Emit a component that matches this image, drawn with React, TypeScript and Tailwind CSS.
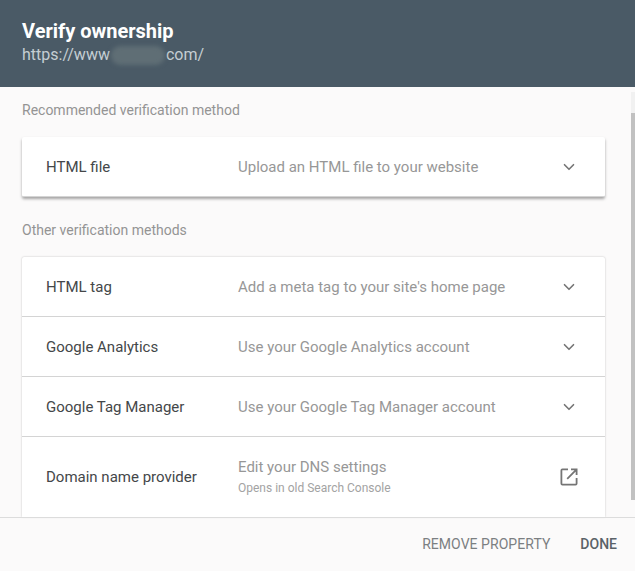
import { ChevronDown } from "lucide-react";

interface Method {
  name: string;
  description: string;
}

const otherMethods: Method[] = [
  { name: "HTML tag", description: "Add a meta tag to your site's home page" },
  { name: "Google Analytics", description: "Use your Google Analytics account" },
  { name: "Google Tag Manager", description: "Use your Google Tag Manager account" },
];

function MethodRow({ name, description }: Method) {
  return (
    <div className="flex h-[60px] items-center border-b border-[#d4d4d4] pl-6 pr-[27px] pt-[1px]">
      <div className="w-[192px] text-[15px] text-[#444749]">{name}</div>
      <div className="flex-1 text-[15px] text-[#979797]">{description}</div>
      <ChevronDown size={18} strokeWidth={2.2} className="text-[#757575]" />
    </div>
  );
}

export default function App() {
  return (
    <div className="flex h-[571px] w-[635px] flex-col overflow-hidden bg-[#fbfafa] font-['Roboto',sans-serif]">
      <header className="h-[87px] shrink-0 bg-[#4a5a66] pl-[22px] pt-[20px]">
        <h1 className="text-[20px] font-bold leading-[23px] text-white">Verify ownership</h1>
        <div className="flex items-center text-[16px] leading-[24px] text-[#c5ced3]">
          <span>https://www</span>
          <span className="mx-[1px] h-[19px] w-[54px] rounded-full bg-[#5f6e75] blur-[2px]" />
          <span>com/</span>
        </div>
      </header>

      <div className="flex min-h-0 flex-1">
        <main className="min-w-0 flex-1 pl-[22px] pr-[26px]">
          <h2 className="pt-[15px] text-[14px] leading-[17px] text-[#949494]">Recommended verification method</h2>
          <section className="mt-[18px] rounded-[2px] bg-white shadow-[0_2px_3px_rgba(0,0,0,0.35)]">
            <MethodRow name="HTML file" description="Upload an HTML file to your website" />
          </section>
          <h2 className="mt-[25px] text-[14px] leading-[17px] text-[#949494]">Other verification methods</h2>
          <section className="mt-[18px] h-[260px] rounded-t-[2px] bg-white shadow-[0_0_2px_rgba(0,0,0,0.25)]">
            {otherMethods.map((m) => (
              <MethodRow key={m.name} {...m} />
            ))}
            <div className="flex h-[80px] items-center pl-6 pr-[27px]">
              <div className="w-[192px] text-[15px] text-[#444749]">Domain name provider</div>
              <div className="flex-1 pb-[1px]">
                <div className="text-[15px] leading-[20px] text-[#979797]">Edit your DNS settings</div>
                <div className="mt-[3px] text-[12px] leading-[16px] text-[#a3a3a3]">Opens in old Search Console</div>
              </div>
              <svg width="18" height="18" viewBox="0 0 18 18" fill="none" stroke="#757575" strokeWidth="1.8">
                <path d="M8 1.4H2.4a1 1 0 0 0-1 1v13.200000000000001a1 1 0 0 0 1 1h13.2a1 1 0 0 0 1-1V10" />
                <path d="M11 1.4h5.6V7M16.6 1.4 7.2 10.8" />
              </svg>
            </div>
          </section>
        </main>
        <div className="flex w-[4px] shrink-0 flex-col pt-[5px]">
          <div className="h-[21px] bg-[#f1f1f1]" />
          <div className="h-[387px] bg-[#c1c1c1]" />
        </div>
      </div>

      <footer className="flex h-[54px] shrink-0 items-center justify-end gap-[30px] border-t border-[#dcdcdc] pr-[18px] text-[14px] font-medium">
        <span className="font-normal tracking-[0.05px] text-[#7b7f82]">REMOVE PROPERTY</span>
        <span className="text-[#5a6268]">DONE</span>
      </footer>
    </div>
  );
}
